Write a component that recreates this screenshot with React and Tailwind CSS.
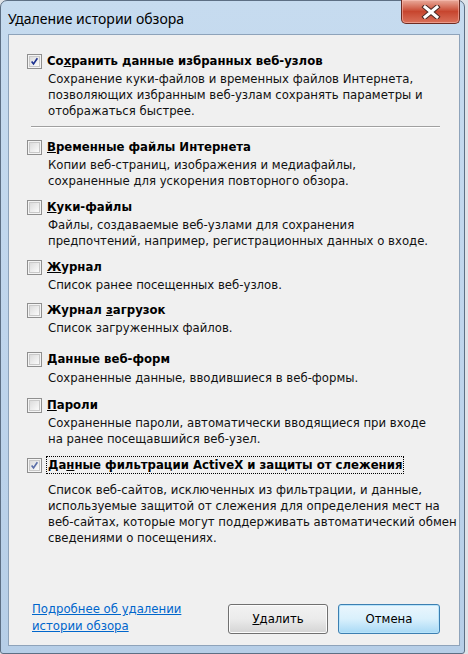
import React from "react";

// --- Окно "Удаление истории обзора" в стиле Windows 7 ---
const FONT = "font-['DejaVu_Sans_Condensed','DejaVu_Sans',sans-serif]";

function CheckBox({ checked, light }) {
  return (
    <div className="w-[15px] h-[15px] shrink-0 border border-[#8f8f8f] bg-[#f4f4f4] p-[1px]">
      <div className="w-full h-full border border-[#c9c9c9] bg-gradient-to-br from-[#dcdcdc] to-[#fbfbfb] flex items-center justify-center">
        {checked && (
          <svg width="11" height="11" viewBox="0 0 11 11">
            <path
              d="M2 5.5 L4.3 8.5 L9 1.5"
              fill="none"
              stroke={light ? "#5a6ea8" : "#1d3291"}
              strokeWidth="2"
            />
          </svg>
        )}
      </div>
    </div>
  );
}

function Item({ checked, light, label, desc, focus, className = "", descGap = "mt-[2px]" }) {
  return (
    <div className={className}>
      <div className="flex items-center h-[16px]">
        <div className="ml-[18px]">
          <CheckBox checked={checked} light={light} />
        </div>
        <div
          className={
            "ml-[5px] font-bold text-black leading-[16px] " +
            (focus ? "outline outline-1 outline-dotted outline-black px-[1px]" : "")
          }
        >
          {label}
        </div>
      </div>
      <div className={"ml-[39px] leading-[16px] text-[#111] " + descGap}>{desc}</div>
    </div>
  );
}

export default function App() {
  return (
    <div className={"w-[468px] h-[654px] bg-[#dfe3e8] " + FONT}>
      <div className="w-[465px] h-[654px] flex flex-col rounded-t-[7px] rounded-b-[3px] border border-[#5d6f84] bg-gradient-to-b from-[#c6dbef] via-[#bfd5ec] to-[#b6cee7]">
        {/* заголовок окна */}
        <div className="h-[33px] flex items-start justify-between shrink-0">
          <div className="pl-[7px] pt-[8px] text-[14px] leading-[20px] text-black font-['Noto_Sans','Open_Sans',sans-serif]">
            Удаление истории обзора
          </div>
          <div className="mr-[4px] -mt-[1px] w-[59px] h-[24px] rounded-b-[5px] border border-t-0 border-[#6e2c22] bg-gradient-to-b from-[#e8aa9b] via-[#c7452e] to-[#d9705a] flex items-center justify-center shadow-[inset_0_0_0_1px_rgba(255,200,190,0.5)]">
            <svg width="20" height="14" viewBox="0 0 20 14">
              <path d="M4 2 L16 12 M16 2 L4 12" stroke="#4a2a25" strokeWidth="5" strokeLinecap="square" />
              <path d="M4 2 L16 12 M16 2 L4 12" stroke="#ffffff" strokeWidth="3" strokeLinecap="square" />
            </svg>
          </div>
        </div>

        {/* клиентская область */}
        <div className="ml-[7px] mr-[4px] mb-[7px] flex-1 border border-[#8ea3ba] bg-[#f0f0f0] text-[13px] flex flex-col">
          <Item
            className="mt-[18px]"
            checked
            label={<>Со<u>х</u>ранить данные избранных веб-узлов</>}
            desc={
              <>
                Сохранение куки-файлов и временных файлов Интернета,
                <br />
                позволяющих избранным веб-узлам сохранять параметры и
                <br />
                отображаться быстрее.
              </>
            }
          />
          <div className="ml-[22px] mr-[19px] mt-[7px] h-[2px] border-t border-[#a0a0a0] border-b border-b-white" />

          <Item
            className="mt-[11px]"
            label={<><u>В</u>ременные файлы Интернета</>}
            desc={
              <>
                Копии веб-страниц, изображения и медиафайлы,
                <br />
                сохраненные для ускорения повторного обзора.
              </>
            }
          />
          <Item
            className="mt-[10px]"
            label={<><u>К</u>уки-файлы</>}
            desc={
              <>
                Файлы, создаваемые веб-узлами для сохранения
                <br />
                предпочтений, например, регистрационных данных о входе.
              </>
            }
          />
          <Item
            className="mt-[10px]"
            label={<><u>Ж</u>урнал</>}
            desc="Список ранее посещенных веб-узлов."
          />
          <Item
            className="mt-[9px]"
            label={<>Журнал <u>з</u>агрузок</>}
            desc="Список загруженных файлов."
          />
          <Item
            className="mt-[15px]"
            descGap="mt-[3px]"
            label={<><u>Д</u>анные веб-форм</>}
            desc="Сохраненные данные, вводившиеся в веб-формы."
          />
          <Item
            className="mt-[11px]"
            label={<><u>П</u>ароли</>}
            desc={
              <>
                Сохраненные пароли, автоматически вводящиеся при входе
                <br />
                на ранее посещавшийся веб-узел.
              </>
            }
          />
          <Item
            className="mt-[10px]"
            descGap="mt-[9px]"
            checked
            light
            focus
            label={<>Да<u>н</u>ные фильтрации ActiveX и защиты от слежения</>}
            desc={
              <>
                Список веб-сайтов, исключенных из фильтрации, и данные,
                <br />
                используемые защитой от слежения для определения мест на
                <br />
                веб-сайтах, которые могут поддерживать автоматический обмен
                <br />
                сведениями о посещениях.
              </>
            }
          />

          {/* нижняя часть: ссылка и кнопки */}
          <div className="mt-auto mb-[11px] flex items-end justify-between">
            <div className="ml-[23px] leading-[17px] text-[#0066cc] underline">
              Подробнее об удалении
              <br />
              истории обзора
            </div>
            <div className="flex gap-[10px] mr-[19px]">
              <button className="w-[100px] h-[30px] rounded-[3px] border border-[#707070] bg-gradient-to-b from-[#f2f2f2] via-[#ebebeb] to-[#d4d4d4] shadow-[inset_0_0_0_1px_#fcfcfc] text-black">
                <u>У</u>далить
              </button>
              <button className="w-[102px] h-[30px] rounded-[3px] border border-[#3c7fb1] bg-gradient-to-b from-[#eaf6fd] via-[#d9f0fc] to-[#a7d9f5] shadow-[inset_0_0_0_1px_#b8e4fb] text-black">
                Отмена
              </button>
            </div>
          </div>
        </div>
      </div>
    </div>
  );
}
